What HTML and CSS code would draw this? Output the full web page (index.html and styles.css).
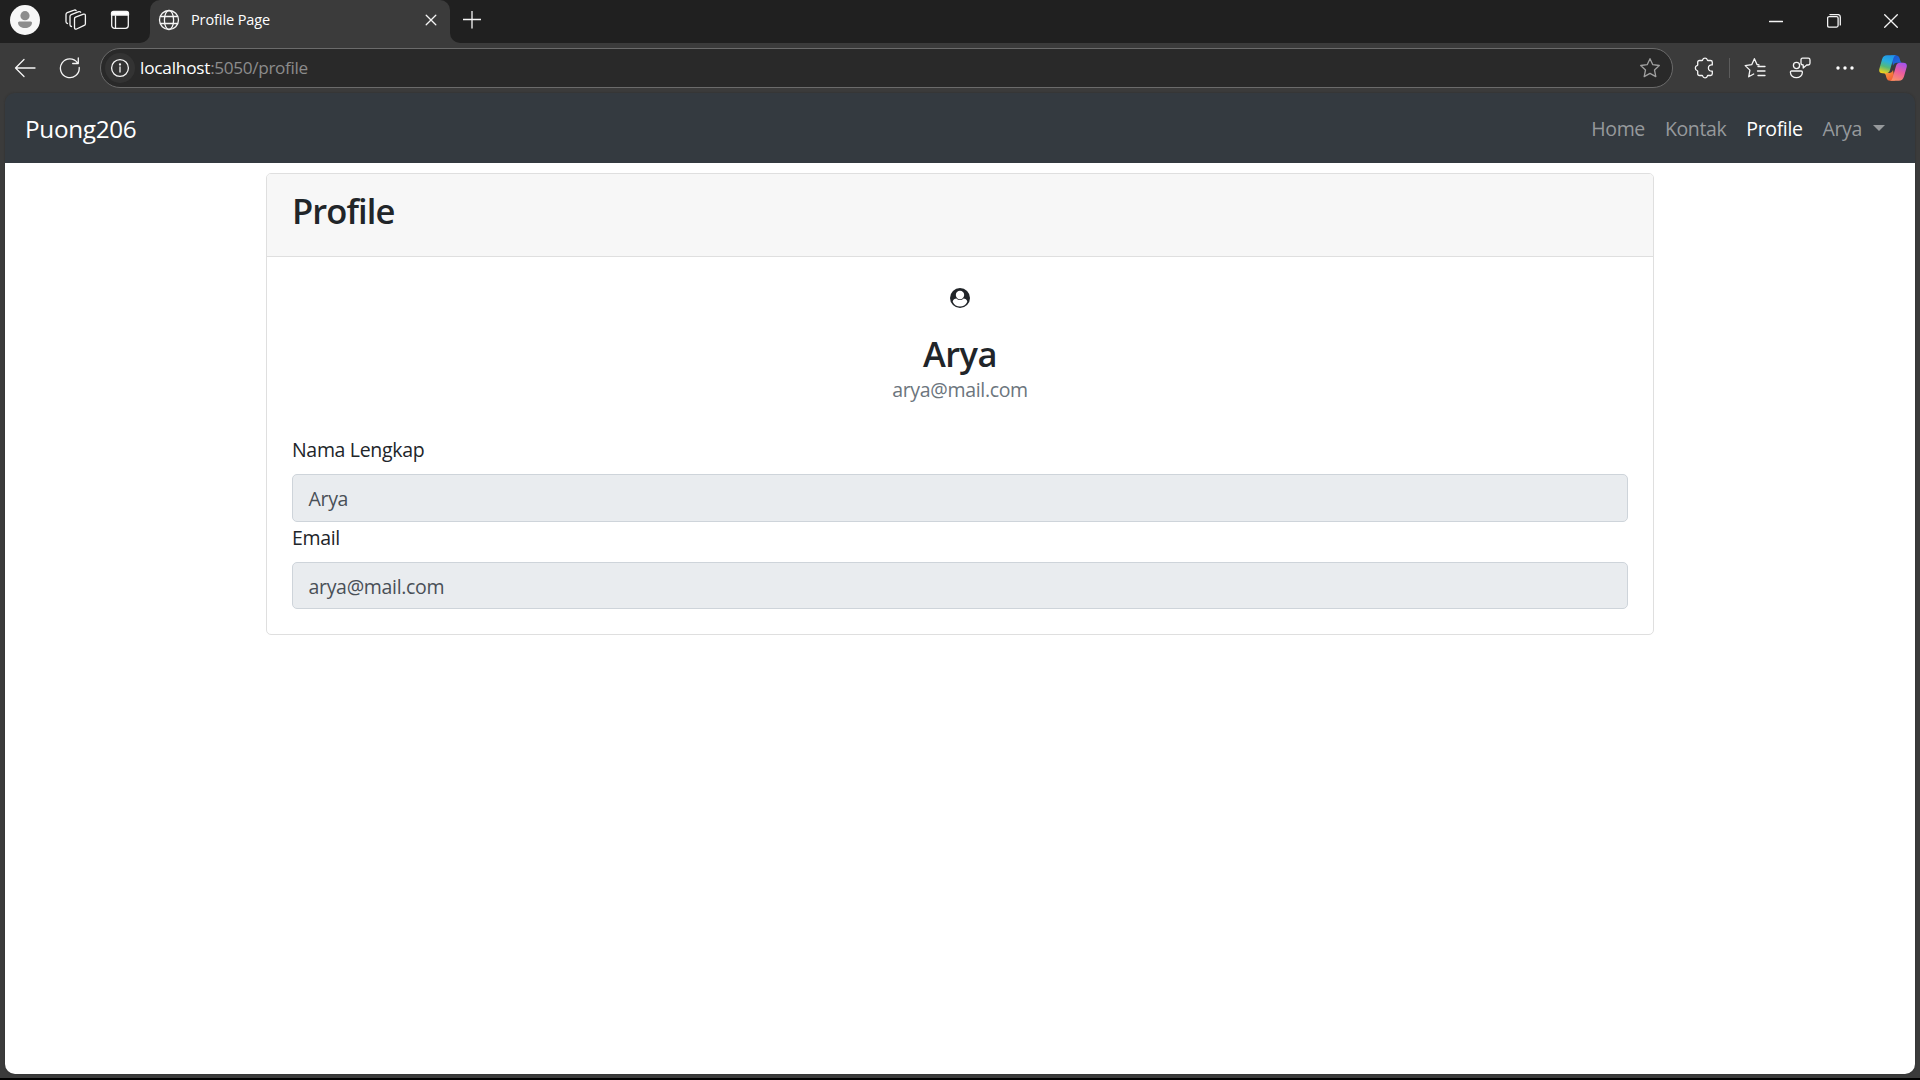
FILE: index.html
```html
<!DOCTYPE html>
<html lang="id">
<head>
<meta charset="utf-8">
<title>Profile Page</title>
<link rel="stylesheet" href="styles.css">
</head>
<body>
<div class="browser">
  <header class="tabstrip">
    <div class="tabstrip-tools">
      <svg class="avatar" width="30" height="30" viewBox="0 0 30 30"><circle cx="15" cy="15" r="15" fill="#f7f7f7"/><circle cx="15" cy="10.7" r="4.6" fill="#8c8c8c"/><path d="M9.4 16.5h11.2q1.6 0 1.4 1.6c-.5 3.200-3.200 5-7 5s-6.500-1.800-7-5q-.2-1.600 1.400-1.600z" fill="#8c8c8c"/></svg>
      <svg class="icon workspaces" width="22" height="22" viewBox="0 0 22 22"><path d="M10.500 8.200l8-3q1.900-.5 1.900 1.500v8q0 1.200-1.200 1.700l-7.600 3.600q-2.100.7-2.100-1.500V9.700q0-1 1-1.500z"/><path d="M6.500 17.500q-1.500-.2-1.500-1.800V7.300q0-1.200 1.200-1.700l7.600-2.900q1.300-.5 1.900.6"/><path d="M2.500 14.500q-1.500-.2-1.500-1.700V5.400q0-1.200 1.200-1.700L9.200 1.200q1.300-.5 1.900.4"/></svg>
      <svg class="icon" width="20" height="20" viewBox="0 0 20 20"><rect x="1.700" y="1.700" width="16.600" height="16.600" rx="2.800"/><path d="M1.500 5V3.500q0-2 2-2h13q2 0 2 2V5z" fill="#fff"/><path d="M5.500 6v12"/></svg>
    </div>
    <div class="tab">
      <svg class="icon" width="22" height="22" viewBox="0 0 22 22"><circle cx="11" cy="11" r="9.500"/><ellipse cx="11" cy="11" rx="4.600" ry="9.500"/><path d="M2.500 7.500h17M2.500 14.500h17"/></svg>
      <span class="tab-title">Profile Page</span>
      <svg class="icon" width="12" height="12" viewBox="0 0 12 12"><path d="M1.200 1.200l9.600 9.600M10.800 1.200l-9.600 9.600"/></svg>
    </div>
    <svg class="icon newtab" width="18" height="18" viewBox="0 0 18 18"><path d="M0 8.500h18M9 0v17"/></svg>
    <div class="window-controls">
      <svg class="icon" width="14" height="14" viewBox="0 0 14 14"><path d="M.5 7.500h13"/></svg>
      <svg class="icon" width="14" height="14" viewBox="0 0 14 14"><rect x=".6" y="2.600" width="10.500" height="10.500" rx="1.500"/><path d="M3 .6h8q2.300 0 2.300 2.300v8"/></svg>
      <svg class="icon" width="14" height="14" viewBox="0 0 14 14"><path d="M.7.700l12.600 12.600M13.300.700L.700 13.300"/></svg>
    </div>
  </header>
  <div class="toolbar">
    <svg class="icon back" width="22" height="20" viewBox="0 0 22 20"><path d="M21 10H1.500M10 1.500L1.500 10l8.500 8.500"/></svg>
    <svg class="icon reload" width="22" height="22" viewBox="0 0 22 22"><path d="M20.200 10.500A9.400 9.400 0 1 1 18.500 5.800M19.300 1v5.500h-5.600"/></svg>
    <div class="address">
      <span class="site-info"><svg class="icon" width="20" height="20" viewBox="0 0 20 20"><circle cx="10" cy="10" r="8.400"/><path d="M10 9v5"/><circle cx="10" cy="6.500" r=".5"/></svg></span>
      <span class="url"><span class="host">localhost</span><span class="path">:5050/profile</span></span>
      <svg class="icon star" width="22" height="22" viewBox="0 0 22 22"><path d="M11 1.700l2.800 6 6.500.8-4.800 4.500 1.300 6.600-5.800-3.200-5.800 3.200 1.300-6.600-4.800-4.500 6.500-.8z"/></svg>
    </div>
    <svg class="icon puzzle" width="20" height="22" viewBox="0 0 20 22"><path d="M5.500 3.500H8q.5 0 .7-.7c.6-2.200 4-2.200 4.600 0q.2.700.7.700h2.500q1.800 0 1.800 1.800v2.600c-2.200-.3-3.900.9-3.900 3.100s1.700 3.400 3.900 3.100v2.600q0 1.800-1.800 1.800H14q-.5 0-.7.700c-.6 2.200-4 2.200-4.600 0q-.2-.7-.7-.700H5.500q-1.800 0-1.800-1.800v-2.500q0-.5-.7-.7c-2.200-.6-2.200-4.200 0-4.800q.7-.2.700-.7V5.300q0-1.800 1.800-1.800z"/></svg>
    <span class="divider"></span>
    <svg class="icon favorites" width="22" height="22" viewBox="0 0 22 22"><path d="M15 7.800l-2-.3-2.600-5.800-2.700 6-6.500.9 4.700 4.500-1.200 6.700 5-2.800M14 9.500h7M13.500 14h7.500M14 18.500h7"/></svg>
    <svg class="icon people" width="22" height="22" viewBox="0 0 22 22"><circle cx="7.500" cy="8.500" r="3.100"/><path d="M2.600 14h9.600q1.200 0 1.200 1.300c0 3.200-2.800 5.400-6 5.400s-6-2.200-6-5.400Q1.400 14 2.600 14z"/><path d="M13.500 1.200h5.700q1.800 0 1.800 1.800v3.200Q21 8 19.200 8h-1.500L14.200 11V8Q12 7.900 12 6.200V3q0-1.800 1.500-1.800z"/></svg>
    <svg class="more" width="18" height="4" viewBox="0 0 18 4"><circle cx="2" cy="2" r="1.700"/><circle cx="9" cy="2" r="1.700"/><circle cx="16" cy="2" r="1.700"/></svg>
    <svg class="copilot" width="28" height="26" viewBox="0 0 28 26">
      <defs>
        <linearGradient id="cool" x1=".6" y1="0" x2=".3" y2="1"><stop offset="0" stop-color="#2196e8"/><stop offset=".35" stop-color="#29aedd"/><stop offset=".65" stop-color="#55b978"/><stop offset="1" stop-color="#f3d21b"/></linearGradient>
        <linearGradient id="warm" x1=".7" y1="0" x2=".3" y2="1"><stop offset="0" stop-color="#a553ed"/><stop offset=".5" stop-color="#ed5d9c"/><stop offset="1" stop-color="#fb9168"/></linearGradient>
        <linearGradient id="blue" x1="0" y1="0" x2="1" y2="1"><stop offset="0" stop-color="#1b4fc9"/><stop offset="1" stop-color="#2478ea"/></linearGradient>
        <linearGradient id="fire" x1="0" y1="0" x2="1" y2="1"><stop offset="0" stop-color="#ffb13b"/><stop offset="1" stop-color="#ee4b35"/></linearGradient>
      </defs>
      <path d="M12 .3h5q2.600 0 3.400 2.500l1 3.400q.6 1.500 2.600 1.500h-6q-3 0-4 3z" fill="url(#blue)"/>
      <path d="M16 25.700h-5q-2.600 0-3.400-2.500l-.9-3.200Q6.200 18 4 18h6q3 0 4-3z" fill="url(#fire)"/>
      <path d="M8.200.3H17q-1.900.5-2.600 3L11 15q-1 3.300-4 3.300H3.500Q-.5 18.300.3 14L3 4.500Q4.200.3 8.200.3z" fill="url(#cool)"/>
      <path d="M19.800 25.700H11q1.900-.5 2.600-3L17 11q1-3.300 4-3.300h3.500q4 0 3.200 4.300L25 21.500q-1.200 4.200-5.200 4.200z" fill="url(#warm)"/>
    </svg>
  </div>
  <div class="viewport">
    <nav class="navbar">
      <span class="brand">Puong206</span>
      <div class="links">
        <span class="link">Home</span>
        <span class="link">Kontak</span>
        <span class="link active">Profile</span>
        <span class="link">Arya</span>
        <span class="caret"></span>
      </div>
    </nav>
    <main class="card">
      <div class="card-header"><h3 class="title">Profile</h3></div>
      <div class="card-body">
        <svg class="person" width="20" height="20" viewBox="0 0 20 20"><circle cx="10" cy="10" r="10" fill="#212529"/><circle cx="10" cy="7" r="4.200" fill="#fff"/><path d="M2.700 13.700C3 11.500 4.800 10.400 6.400 10.400a5 5 0 0 0 7.200 0c1.600 0 3.400 1.100 3.700 3.300C15.800 17 13 18.600 10 18.600S4.200 17 2.700 13.700z" fill="#fff"/></svg>
        <h3 class="name">Arya</h3>
        <p class="mail">arya@mail.com</p>
        <label class="label">Nama Lengkap</label>
        <div class="field">Arya</div>
        <label class="label">Email</label>
        <div class="field field-email">arya@mail.com</div>
      </div>
    </main>
  </div>
</div>
</body>
</html>
```
FILE: styles.css
```css
* { box-sizing: border-box; }
body {
  margin: 0;
  width: 1920px;
  height: 1080px;
  overflow: hidden;
  background: #000;
  color: #212529;
  font: 19.5px/30px "Open Sans", "Noto Sans", sans-serif;
  letter-spacing: -0.32px;
}
h3, p { margin: 0; }
svg { display: block; flex: none; }
span { white-space: nowrap; }
.icon { fill: none; stroke: #f5f5f5; stroke-width: 1.3; stroke-linecap: round; stroke-linejoin: round; }

.browser { height: 1078px; display: flex; flex-direction: column; background: #3b3b3b; }

.tabstrip { height: 43px; display: flex; background: linear-gradient(#202020 33px, #3b3b3b 33px); }
.tabstrip-tools {
  width: 150px;
  padding: 5px 0 8px 10px;
  display: flex;
  align-items: center;
  border-bottom-right-radius: 10px;
  background: #202020;
}
.workspaces { margin: 0 23px 0 25px; }
.tab {
  width: 300px;
  padding: 0 13.500px 3px 8px;
  display: flex;
  align-items: center;
  border-radius: 10px 10px 0 0;
  background: #3b3b3b;
}
.tab-title { flex: 1; margin-left: 11px; font-size: 14.500px; letter-spacing: -0.1px; color: #fff; }
.newtab { position: relative; z-index: 1; margin: 11px 0 0 13px; }
.window-controls {
  flex: 1;
  display: flex;
  justify-content: flex-end;
  gap: 43.500px;
  margin-left: -31px;
  padding: 14px 22px 0 0;
  border-bottom-left-radius: 10px;
  background: #202020;
}

.toolbar { height: 50px; display: flex; align-items: center; }
.back { margin-left: 14px; }
.reload { margin-left: 23px; }
.address {
  width: 1573px;
  height: 40px;
  margin-left: 19px;
  padding: 0 11px 0 4px;
  display: flex;
  align-items: center;
  border: 1px solid #6b6b6b;
  border-radius: 20px;
  background: #292929;
}
.site-info { width: 30px; height: 30px; display: grid; place-items: center; border-radius: 15px; background: #333; }
.url { flex: 1; margin-left: 5px; font-size: 17.200px; letter-spacing: -0.3px; }
.host { color: #fff; letter-spacing: -0.200px; }
.path { color: #8c8c8c; letter-spacing: -0.350px; }
.star { stroke: #a0a0a0; }
.puzzle { margin-left: 21px; }
.divider { width: 1px; height: 20px; margin-left: 15px; background: #5c5c5c; }
.favorites { margin-left: 14px; }
.people { margin-left: 23px; }
.more { margin-left: 25px; fill: #fff; }
.copilot { margin-left: 25px; }

.viewport {
  width: 1910px;
  height: 981px;
  margin-left: 5px;
  border-radius: 10px;
  background: linear-gradient(#343a40 70px, #fff 70px);
  box-shadow: 0 0 2px #2c2c2c;
}
.navbar { height: 70px; padding: 2px 30px 0 20px; display: flex; align-items: center; justify-content: space-between; }
.brand { font-size: 24.300px; color: #fff; }
.links { display: flex; align-items: center; gap: 20px; color: #96999c; }
.link { letter-spacing: -0.370px; }
.active { color: #fff; }
.caret { margin: -2px 0 0 -9px; border: 6px solid transparent; border-top-color: #96999c; border-bottom: 0; }

.card { width: 1388px; height: 462px; margin: 10px auto 0; overflow: hidden; border: 1px solid #dfdfdf; border-radius: 5px; }
.card-header { height: 83px; padding: 14px 25px; background: #f7f7f7; border-bottom: 1px solid #dfdfdf; }
.title, .name { font-size: 34.500px; line-height: 46px; font-weight: 550; }
.title { letter-spacing: -0.9px; }
.name { margin-top: 23px; letter-spacing: -0.5px; text-align: center; }
.card-body { padding: 31px 25px 0; display: flex; flex-direction: column; }
.person { align-self: center; }
.mail { margin-top: -2px; text-align: center; color: #6c757d; }
.label { margin-top: 30px; color: #212529; }
.field { height: 48px; margin-top: 9px; padding: 2px 15.500px 0; display: flex; align-items: center; border: 1px solid #ced4da; border-radius: 5px; background: #e9ecef; color: #495057; }
.field-email { height: 47px; }
.field + .label { margin-top: 1px; }
```
